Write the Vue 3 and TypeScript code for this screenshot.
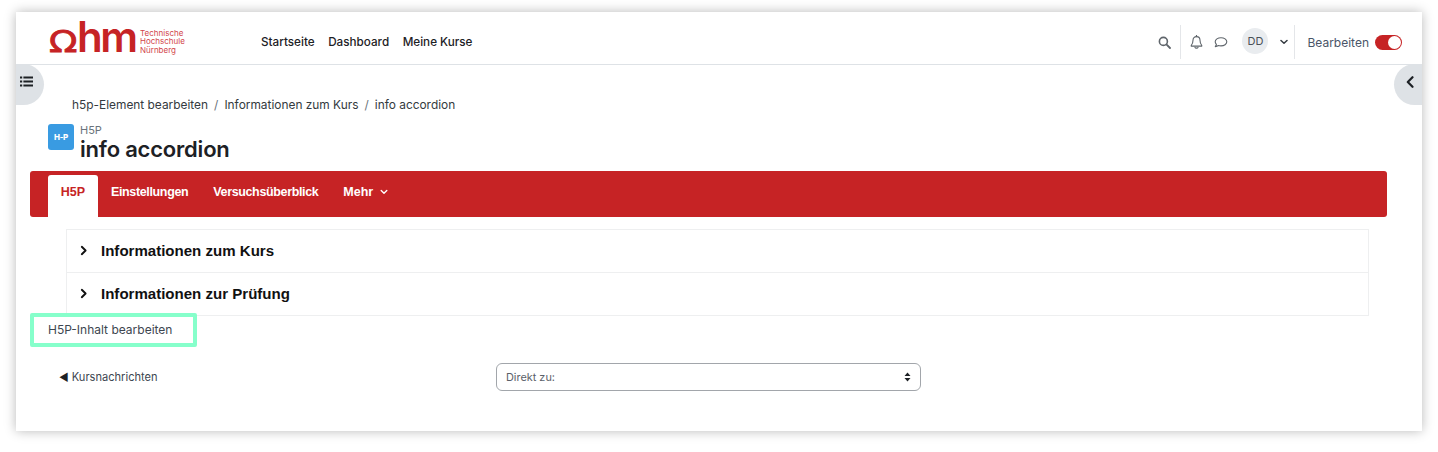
<script setup lang="ts">
const navLinks: string[] = ["Startseite", "Dashboard", "Meine Kurse"];
const crumbs: string[] = ["h5p-Element bearbeiten", "Informationen zum Kurs", "info accordion"];
const tabs: string[] = ["Einstellungen", "Versuchsüberblick"];
const sections: string[] = ["Informationen zum Kurs", "Informationen zur Prüfung"];
</script>

<template>
  <div class="shell">
    <div class="page">
      <header class="navbar">
        <div class="logo">
          <span class="logo-mark"><span class="omega">Ω</span><span class="hm">hm</span></span>
          <span class="logo-text">Technische<br />Hochschule<br />Nürnberg</span>
        </div>
        <nav class="main-nav">
          <a v-for="link in navLinks" :key="link">{{ link }}</a>
        </nav>
        <div class="nav-right">
          <svg class="ic search" width="13" height="13" viewBox="0 0 13 13">
            <circle cx="5.4" cy="5.4" r="4" fill="none" stroke="#5f656b" stroke-width="1.6" />
            <path d="M8.4 8.4 12 12" stroke="#5f656b" stroke-width="1.8" stroke-linecap="round" />
          </svg>
          <span class="divider first"></span>
          <svg class="ic bell" width="13" height="14" viewBox="0 0 13 14">
            <path d="M6.5 1.6C4.4 1.6 3 3.2 3 5.3c0 3-.8 4.1-1.8 5.2v.6h10.6v-.6C10.800 9.400 10 8.300 10 5.300 10 3.200 8.600 1.600 6.500 1.600Z" fill="none" stroke="#5f656b" stroke-width="1.1" stroke-linejoin="round" />
            <path d="M6.500.4v1.2M5 12.300c.3 1 2.700 1 3 0" fill="none" stroke="#5f656b" stroke-width="1.200" stroke-linecap="round" />
          </svg>
          <svg class="ic chat" width="14" height="13" viewBox="0 0 14 13">
            <path d="M7 1.700c-3.200 0-5.800 1.800-5.800 4.100 0 1 .5 1.800 1.200 2.500-.2.900-.7 1.700-1.100 2.300 1.100-.1 2.200-.5 3-1.100.8.300 1.700.4 2.700.4 3.200 0 5.800-1.800 5.800-4.100S10.200 1.700 7 1.700Z" fill="none" stroke="#5f656b" stroke-width="1.100" stroke-linejoin="round" />
          </svg>
          <span class="avatar">DD</span>
          <svg class="ic caret" width="8" height="6" viewBox="0 0 8 6">
            <path d="M1 1.500 4 4.300 7 1.500" fill="none" stroke="#343a40" stroke-width="1.500" stroke-linecap="round" stroke-linejoin="round" />
          </svg>
          <span class="divider second"></span>
          <span class="edit-label">Bearbeiten</span>
          <span class="toggle"><span class="knob"></span></span>
        </div>
      </header>

      <button class="drawer-toggle left" type="button">
        <svg width="13" height="11" viewBox="0 0 13 11">
          <path d="M0 .5h2.200v2H0ZM0 4.500h2.200v2H0ZM0 8.500h2.200v2H0ZM3.400.5H13v2H3.400ZM3.400 4.500H13v2H3.400ZM3.400 8.500H13v2H3.400Z" fill="#1d2125" />
        </svg>
      </button>
      <button class="drawer-toggle right" type="button">
        <svg width="8" height="12" viewBox="0 0 8 12">
          <path d="M6.500 1.200 1.800 6l4.700 4.800" fill="none" stroke="#1d2125" stroke-width="2.200" stroke-linecap="round" stroke-linejoin="round" />
        </svg>
      </button>

      <main class="content">
        <ol class="breadcrumb">
          <li v-for="crumb in crumbs" :key="crumb">{{ crumb }}</li>
        </ol>

        <div class="page-head">
          <div class="activity-icon"><span>H-P</span></div>
          <div class="head-text">
            <div class="activity-type">H5P</div>
            <h1>info accordion</h1>
          </div>
        </div>

        <div class="tabbar">
          <a class="tab active">H5P</a>
          <a v-for="tab in tabs" :key="tab" class="tab">{{ tab }}</a>
          <a class="tab more">
            Mehr
            <svg width="8" height="6" viewBox="0 0 8 6">
              <path d="M1.200 1.500 4 4.200 6.800 1.500" fill="none" stroke="#fff" stroke-width="1.400" stroke-linecap="round" stroke-linejoin="round" />
            </svg>
          </a>
        </div>

        <div class="accordion">
          <div v-for="section in sections" :key="section" class="acc-row">
            <svg width="8" height="11" viewBox="0 0 8 11">
              <path d="M1.800 1.800 5.600 5.500 1.800 9.200" fill="none" stroke="#111" stroke-width="1.900" stroke-linecap="round" stroke-linejoin="round" />
            </svg>
            <span>{{ section }}</span>
          </div>
        </div>

        <a class="edit-content">H5P-Inhalt bearbeiten</a>

        <div class="activity-nav">
          <a class="prev"><span class="prev-arrow">◄</span> Kursnachrichten</a>
          <div class="jump">
            <span>Direkt zu:</span>
            <svg width="7" height="10" viewBox="0 0 7 10">
              <path d="M3.500 .5 6.500 4H.5ZM3.500 9.500 .5 6h6Z" fill="#1d2125" />
            </svg>
          </div>
        </div>
      </main>
    </div>
  </div>
</template>

<style>
html,
body {
  background: #fff;
}
</style>

<style scoped>
.shell {
  box-sizing: border-box;
  height: 452px;
  padding: 12px 0 0 16px;
}

.page {
  position: relative;
  box-sizing: border-box;
  width: 1406px;
  height: 419px;
  background: #fff;
  box-shadow: 0 0 11px rgba(0, 0, 0, 0.28);
  font-family: Inter, "Liberation Sans", sans-serif;
  color: #1d2125;
}

.navbar {
  box-sizing: border-box;
  display: flex;
  align-items: center;
  height: 53px;
  border-bottom: 1px solid #dee2e6;
  padding: 8px 0 0 33px;
}

.logo {
  display: flex;
  align-items: center;
  width: 212px;
}

.logo-mark {
  display: flex;
  align-items: baseline;
  width: 91px;
  color: #c62325;
  line-height: 36px;
  height: 36px;
  margin-top: -10px;
}

.omega {
  font-family: "DejaVu Sans", sans-serif;
  font-size: 31px;
  font-weight: 400;
  display: inline-block;
  width: 28px;
  transform: scaleX(1.2);
  transform-origin: left bottom;
  -webkit-text-stroke: 0.8px #c62325;
}

.hm {
  font-family: Inter, sans-serif;
  font-size: 42px;
  font-weight: 600;
  letter-spacing: -2.500px;
}

.logo-text {
  font-size: 8px;
  line-height: 8.500px;
  color: #d2454a;
  margin-top: -1px;
}

.main-nav {
  display: flex;
  gap: 13.500px;
  font-size: 11.700px;
  font-weight: 500;
  color: #1d2125;
}

.nav-right {
  display: flex;
  align-items: center;
  margin-left: auto;
  padding-right: 20px;
  font-size: 12px;
}

.ic {
  flex: none;
}

.divider {
  width: 1px;
  height: 34px;
  background: #e4e6e9;
}

.divider.first {
  margin: 0 9px 0 9px;
}

.chat {
  margin-left: 11px;
}

.avatar {
  display: flex;
  align-items: center;
  justify-content: center;
  width: 26px;
  height: 26px;
  margin: -3px 0 0 14px;
  border-radius: 50%;
  background: #e9ecef;
  color: #495057;
  font-size: 11px;
}

.caret {
  margin-left: 12px;
}

.divider.second {
  margin: 0 12px 0 6px;
}

.edit-label {
  color: #4a5568;
  font-size: 12px;
}

.toggle {
  display: flex;
  justify-content: flex-end;
  align-items: center;
  box-sizing: border-box;
  width: 27px;
  height: 15px;
  margin-left: 6px;
  padding: 1px;
  border-radius: 8px;
  background: #c62325;
}

.knob {
  width: 13px;
  height: 13px;
  border-radius: 50%;
  background: #fff;
}

.drawer-toggle {
  position: absolute;
  top: 52px;
  display: flex;
  align-items: center;
  height: 41px;
  width: 28px;
  padding: 0 0 6px;
  border: 0;
  background: #dee2e6;
}

.drawer-toggle.left {
  left: 0;
  justify-content: flex-start;
  padding-left: 4px;
  border-radius: 0 21px 21px 0;
}

.drawer-toggle.right {
  right: 0;
  justify-content: flex-end;
  padding-right: 8px;
  border-radius: 21px 0 0 21px;
}

.content {
  display: flex;
  flex-direction: column;
  padding: 32px 35px 0 14px;
}

.breadcrumb {
  display: flex;
  margin: 0;
  padding: 0 0 0 42px;
  list-style: none;
  font-size: 11.900px;
  line-height: 16px;
  color: #343a40;
}

.breadcrumb li + li::before {
  content: "/";
  padding: 0 6px;
  color: #6a737b;
}

.page-head {
  display: flex;
  gap: 6px;
  margin: 11px 0 0 18px;
}

.activity-icon {
  display: flex;
  align-items: center;
  justify-content: center;
  width: 26px;
  height: 26px;
  border-radius: 3px;
  background: #399be2;
  color: #fff;
  font-size: 8px;
  font-weight: 800;
  letter-spacing: -0.3px;
}

.activity-type {
  font-size: 11px;
  line-height: 12px;
  color: #6a737b;
}

h1 {
  margin: 0;
  font-size: 22px;
  line-height: 27px;
  font-weight: 600;
  letter-spacing: -0.2px;
  color: #1d2125;
}

.tabbar {
  display: flex;
  align-items: flex-end;
  height: 46px;
  margin-top: 8px;
  padding-left: 18px;
  border-radius: 3px;
  background: #c62325;
  font-family: "Liberation Sans", Arial, sans-serif;
  font-size: 12.500px;
  font-weight: 700;
  color: #fff;
}

.tab {
  display: flex;
  align-items: center;
  height: 42px;
  padding: 0 12px 8px 13px;
  box-sizing: border-box;
  letter-spacing: -0.36px;
}

.tab.active {
  width: 50px;
  justify-content: center;
  padding: 0 0 8px;
  border-radius: 3px 3px 0 0;
  background: #fff;
  color: #c62325;
  letter-spacing: 0;
}

.tab.more {
  gap: 7px;
  letter-spacing: 0;
}

.accordion {
  margin: 12px 18px 0 36px;
  border: 1px solid #eeeff0;
  border-bottom: 0;
}

.acc-row {
  box-sizing: border-box;
  display: flex;
  align-items: center;
  height: 43px;
  padding: 0 0 2px 13px;
  gap: 13px;
  border-bottom: 1px solid #eeeff0;
  font-family: "Liberation Sans", Arial, sans-serif;
  font-size: 15.050px;
  font-weight: 700;
  color: #111;
}

.edit-content {
  position: relative;
  box-sizing: border-box;
  display: flex;
  align-items: center;
  width: 167px;
  height: 34px;
  margin-top: -3px;
  padding: 0 0 1px 14px;
  border: 4px solid #86ffcb;
  border-radius: 2px;
  font-size: 12px;
  color: #3d4650;
}

.activity-nav {
  display: flex;
  align-items: center;
  margin-top: 16px;
}

.prev {
  width: 466px;
  padding-left: 29px;
  box-sizing: border-box;
  font-size: 11.100px;
  color: #3d4650;
}

.prev-arrow {
  color: #1d2125;
  font-size: 10.500px;
}

.jump {
  box-sizing: border-box;
  display: flex;
  align-items: center;
  justify-content: space-between;
  width: 425px;
  height: 28px;
  padding: 0 9px;
  border: 1px solid #a2a6ab;
  border-radius: 6px;
  font-size: 10.900px;
  color: #5a6169;
}
</style>
